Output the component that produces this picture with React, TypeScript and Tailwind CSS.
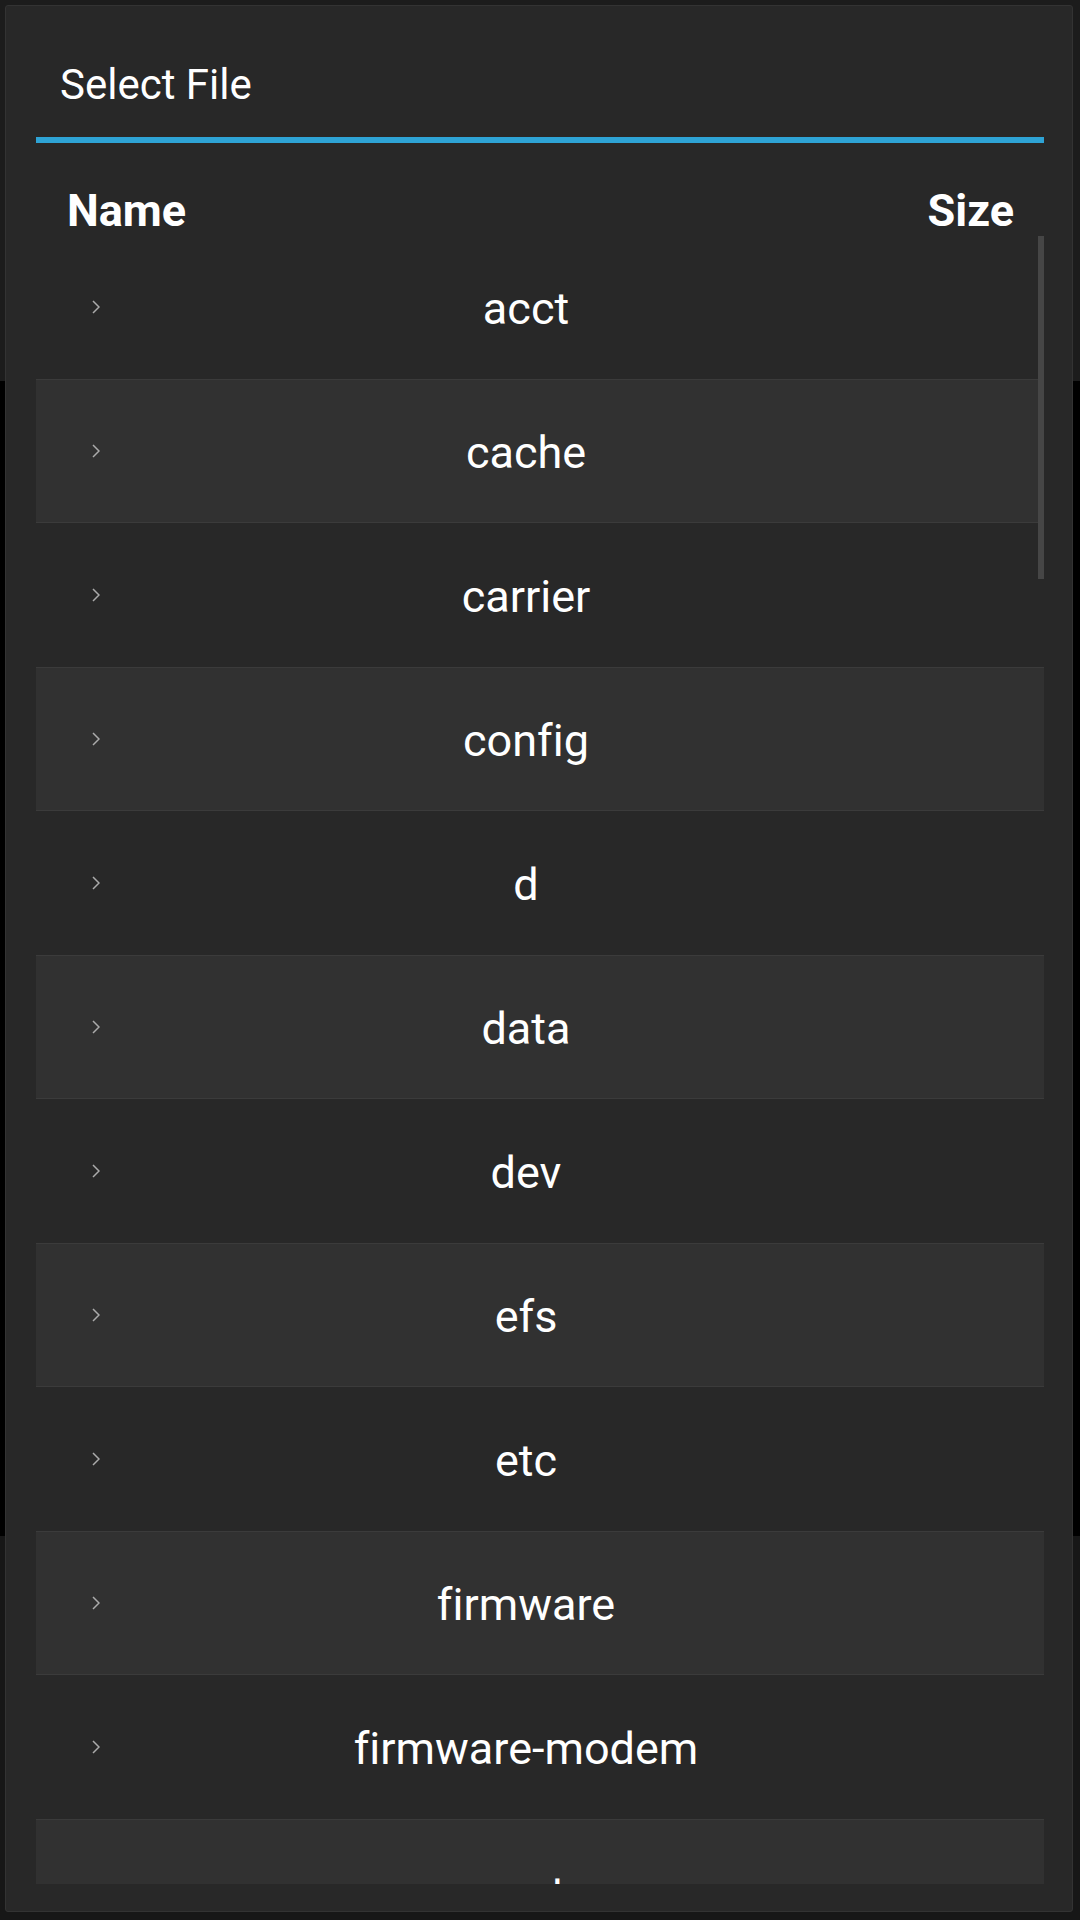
const files = [
  "acct",
  "cache",
  "carrier",
  "config",
  "d",
  "data",
  "dev",
  "efs",
  "etc",
  "firmware",
  "firmware-modem",
  "mnt",
];

function Chevron() {
  return (
    <svg width="8" height="14" viewBox="0 0 8 14" fill="none">
      <polyline points="1,1 7,7 1,13" stroke="#ababab" strokeWidth="1.5" strokeLinejoin="miter" />
    </svg>
  );
}

function FileRow({ name, alt }: { name: string; alt: boolean }) {
  return (
    <div
      className={
        alt
          ? "flex h-[144px] shrink-0 items-center border-y border-[#3b3b3b] bg-[#313131]"
          : "flex h-[144px] shrink-0 items-center"
      }
    >
      <div className="flex w-[120px] items-center pl-[56px]">
        <Chevron />
      </div>
      <div className="flex-1 pt-[2px] text-center text-[45px] leading-none text-white">{name}</div>
      <div className="w-[148px]" />
    </div>
  );
}

export default function App() {
  return (
    <div className="relative h-[1920px] w-[1080px] overflow-hidden bg-black font-['Roboto',sans-serif] [font-variant-ligatures:none]">
      {/* dimmed app behind the dialog */}
      <div className="flex h-full flex-col">
        <div className="h-[381px] bg-[#1c1c1c]" />
        <div className="flex-1" />
        <div className="h-[384px] bg-[#171717]" />
      </div>

      <div className="absolute left-[5px] top-[5px] flex h-[1907px] w-[1068px] flex-col rounded-[3px] border border-[#333333] bg-[#282828] pl-[30px] pr-[28px]">
        <div className="h-[131px] shrink-0 pl-[24px] pt-[58px] text-[42px] leading-none text-white">Select File</div>
        <div className="h-[6px] shrink-0 bg-[#2ea3d5]" />

        <div className="flex h-[92px] shrink-0 justify-between pl-[31px] pr-[30px] pt-[45px] text-[45px] font-bold leading-none text-white">
          <span>Name</span>
          <span>Size</span>
        </div>

        <div className="relative flex h-[1649px] shrink-0 flex-col overflow-hidden">
          {files.map((f, i) => (
            <FileRow key={f} name={f} alt={i % 2 === 1} />
          ))}
          <div className="absolute right-0 top-[1px] h-[343px] w-[6px] bg-[#464646]" />
        </div>
      </div>
    </div>
  );
}
